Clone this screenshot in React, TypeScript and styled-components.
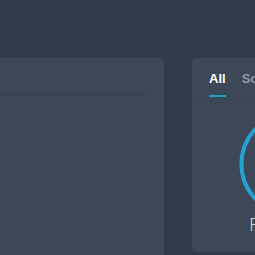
import React, { useState } from "react";
import styled, { createGlobalStyle } from "styled-components";

const GlobalStyle = createGlobalStyle`
  html, body {
    margin: 0;
    padding: 0;
    background: #2f3a4b;
    font-family: Roboto, "Liberation Sans", Arial, sans-serif;
  }
`;

const Page = styled.div`
  width: 255px;
  height: 255px;
  overflow: hidden;
  background: #2f3a4b;
`;

const Board = styled.div`
  display: flex;
  align-items: flex-start;
  gap: 28px;
  padding-top: 58px;
  margin-left: -20px;
`;

const Panel = styled.section`
  flex-shrink: 0;
  width: 184px;
  height: 230px;
  background: #3c4758;
  border-radius: 5px;
  padding: 0 19px 0 20px;
  box-sizing: border-box;
`;

const PanelHeader = styled.div`
  height: 37px;
  border-bottom: 1px solid #36424e;
`;

const Card = styled.section`
  flex-shrink: 0;
  width: 200px;
  height: 194px;
  background: #3c4758;
  border-radius: 5px;
  display: flex;
  flex-direction: column;
`;

const TabBar = styled.div`
  display: flex;
  gap: 16px;
  padding: 0 17px;
  border-bottom: 1px solid #384352;
`;

const Tab = styled.button<{ $active: boolean }>`
  border: none;
  background: transparent;
  padding: 13px 0 9px;
  margin: 0;
  font-family: "Liberation Sans", Arial, sans-serif;
  font-size: 13px;
  line-height: 15px;
  font-weight: 700;
  color: ${(p) => (p.$active ? "#ffffff" : "#8f99a6")};
  border-bottom: 2px solid ${(p) => (p.$active ? "#1d9fcb" : "transparent")};
  margin-bottom: -1px;
  cursor: pointer;
`;

const Body = styled.div`
  display: flex;
  flex-direction: column;
  align-items: center;
  padding-top: 14px;
`;

const Ring = styled.svg`
  display: block;
`;

const Caption = styled.div`
  margin-top: -1px;
  font-size: 18px;
  line-height: 18px;
  font-weight: 300;
  letter-spacing: 1px;
  white-space: nowrap;
  color: #d3d8de;
`;

const tabs = ["All", "Social", "Direct"];

export default function App() {
  const [active, setActive] = useState("All");
  return (
    <Page>
      <GlobalStyle />
      <Board>
        <Panel>
          <PanelHeader />
        </Panel>
        <Card>
          <TabBar>
            {tabs.map((t) => (
              <Tab key={t} $active={active === t} onClick={() => setActive(t)}>
                {t}
              </Tab>
            ))}
          </TabBar>
          <Body>
            <Ring width="106" height="106" viewBox="0 0 106 106">
              <circle cx="53" cy="53" r="50.5" fill="none" stroke="#22a4d1" strokeWidth="4" />
            </Ring>
            <Caption>Followers</Caption>
          </Body>
        </Card>
      </Board>
    </Page>
  );
}
